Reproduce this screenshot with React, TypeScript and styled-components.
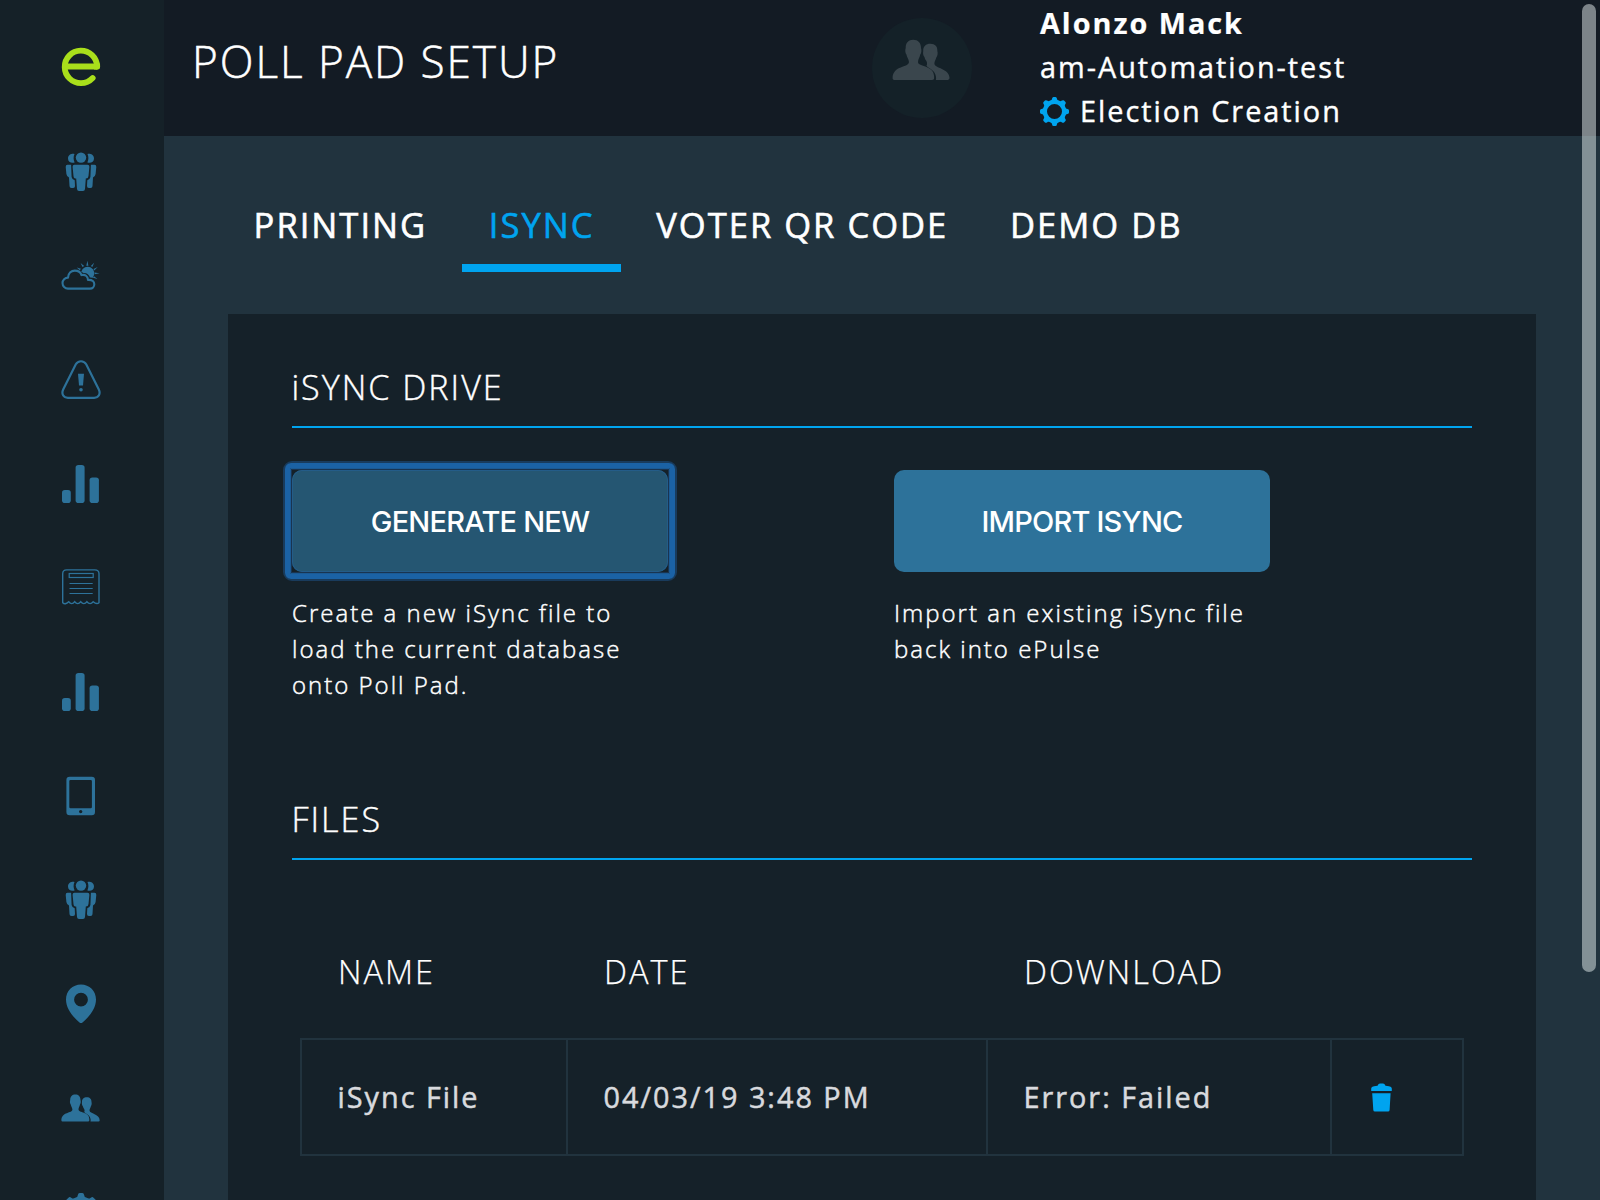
import React from "react";
import styled, { createGlobalStyle } from "styled-components";

const Global = createGlobalStyle`
  *, *::before, *::after { box-sizing: border-box; }
  body { margin: 0; overflow: hidden; background: #21333e; }
`;

const sans = `"Open Sans", "Noto Sans", sans-serif`;

const Page = styled.div`
  position: relative;
  display: flex;
  width: 1600px;
  height: 1200px;
  overflow: hidden;
  background: #21333e;
  color: #fff;
  font-family: ${sans};
`;

const Sidebar = styled.nav`
  flex: none;
  width: 164px;
  height: 1200px;
  padding: 16px 3px 0 0;
  display: flex;
  flex-direction: column;
  align-items: center;
  background: #152128;
  color: #2d729a;
  overflow: hidden;
`;

const NavItem = styled.a<{ $accent?: boolean }>`
  flex: none;
  display: flex;
  align-items: center;
  justify-content: center;
  width: 100%;
  height: 104px;
  padding-bottom: ${(p) => (p.$accent ? "2px" : "0")};
  color: ${(p) => (p.$accent ? "#a9df1b" : "inherit")};
`;

const Content = styled.div`
  flex: 1;
  display: flex;
  flex-direction: column;
`;

const Header = styled.header`
  flex: none;
  display: flex;
  height: 136px;
  padding-left: 28px;
  background: #131b24;
`;

const Title = styled.h1`
  margin: 0;
  width: 680px;
  font-size: 44.1px;
  font-weight: 300;
  line-height: 123px;
  letter-spacing: 1.95px;
  -webkit-text-stroke: 0.5px currentColor;
`;

const Avatar = styled.div`
  width: 100px;
  height: 100px;
  margin-top: 18px;
  padding: 21px 3px 0 0;
  border-radius: 50%;
  background: #142128;
  color: #3a464d;
  text-align: center;
`;

const UserInfo = styled.div`
  margin-left: 68px;
  font-size: 28.8px;
  letter-spacing: 2px;
`;

const UserLine = styled.div<{ $bold?: boolean }>`
  display: flex;
  align-items: center;
  height: 44px;
  white-space: nowrap;
  font-weight: ${(p) => (p.$bold ? 700 : 500)};
  -webkit-text-stroke: ${(p) => (p.$bold ? "0.2px" : "0.4px")} currentColor;
`;

const StageIcon = styled.span`
  display: flex;
  margin-right: 11px;
  padding-top: 2px;
  color: #00a4ef;
`;

const Tabs = styled.div`
  display: flex;
  gap: 8.5px;
  height: 136px;
  padding: 48px 0 0 63px;
`;

const Tab = styled.div<{ $active?: boolean }>`
  height: 88px;
  padding: 0 26.6px;
  font-size: 34.56px;
  font-weight: 500;
  line-height: 82px;
  letter-spacing: 2px;
  white-space: nowrap;
  border-bottom: 8px solid ${(p) => (p.$active ? "#00a4ef" : "transparent")};
  color: ${(p) => (p.$active ? "#00a4ef" : "#fff")};
  -webkit-text-stroke: 0.6px currentColor;
`;

const Panel = styled.main`
  width: 1308px;
  height: 886px;
  margin: 42px 0 0 64px;
  padding: 50px 64px 0;
  background: #152129;
`;

const SectionTitle = styled.h2`
  margin: 0;
  height: 64px;
  font-size: 34.1px;
  font-weight: 300;
  line-height: 47px;
  letter-spacing: 2px;
  text-indent: -0.6px;
  border-bottom: 2px solid #00a4ef;
  -webkit-text-stroke: 0.4px currentColor;
`;

const Actions = styled.div`
  display: grid;
  grid-template-columns: 376px 376px;
  column-gap: 226px;
  height: 368px;
  padding-top: 42px;
`;

const Button = styled.button<{ $focused?: boolean }>`
  display: block;
  width: 376px;
  height: 102px;
  padding: 2px 0 0;
  border: 0;
  border-radius: 10px;
  background: ${(p) => (p.$focused ? "#255672" : "#2d729a")};
  box-shadow: ${(p) => (p.$focused ? "inset 0 0 0 1px #245c88" : "none")};
  color: #fff;
  font: 500 29px/100px Inter, "Liberation Sans", sans-serif;
  letter-spacing: -0.8px;
`;

const FocusRing = styled.div`
  width: 394px;
  height: 120px;
  margin: -9px;
  border: 2px solid #193b5c;
  border-radius: 9px;
  background: #152129;
`;

const FocusInner = styled.div`
  height: 116px;
  border: 5px solid #1b62a5;
  border-radius: 6px;
  padding: 2px;
  box-shadow: inset 0 0 0 1px #1b5a94, inset 0 0 0 2px #193451;
`;

const Hint = styled.p`
  margin: 23px 0 0;
  font-size: 24px;
  font-weight: 300;
  line-height: 36px;
  letter-spacing: 2px;
  white-space: pre;
  -webkit-text-stroke: 0.45px currentColor;
`;

const Table = styled.div`
  margin: 68px 8px 0;
`;

const Row = styled.div<{ $head?: boolean }>`
  display: grid;
  grid-template-columns: 266px 420px 344px 130px;
  height: ${(p) => (p.$head ? "110px" : "118px")};
  ${(p) => (p.$head ? "padding-left: 3px;" : "border: 2px solid #21333e;")}
`;

const HeadCell = styled.div`
  padding-left: 35px;
  font-size: 32.5px;
  font-weight: 300;
  line-height: 88px;
  letter-spacing: 2px;
  -webkit-text-stroke: 0.25px currentColor;
`;

const Cell = styled.div<{ $icon?: boolean }>`
  display: flex;
  align-items: center;
  padding: 0 0 ${(p) => (p.$icon ? 0 : 2)}px ${(p) => (p.$icon ? 39 : 35.5)}px;
  font-size: 28.8px;
  font-weight: 500;
  letter-spacing: 2px;
  color: #d8dade;
  -webkit-text-stroke: 0.5px currentColor;
  &:not(:last-child) { border-right: 2px solid #21333e; }
`;

const Scrollbar = styled.div`
  position: absolute;
  top: 4px;
  left: 1582px;
  width: 14px;
  height: 968px;
  border-radius: 7px;
  background: rgba(235, 243, 243, 0.49);
`;

const Logo = () => (
  <svg width="40" height="40" viewBox="0 0 40 40" fill="none" stroke="currentColor" strokeWidth="5.800">
    <path d="M3 19.500H36" />
    <path d="M36.100 19.500A16.200 16.200 0 1 0 20 36.100C25 36.100 28.700 34.200 31.700 31" strokeLinecap="round" />
    <path d="M33 16.600H39L39.100 19.500Q39 22.400 36 22.400H33Z" fill="currentColor" stroke="none" />
  </svg>
);

const People = () => (
  <svg width="32" height="40" viewBox="0 0 32 40" fill="currentColor">
    <circle cx="16" cy="5.6" r="5.2" />
    <path d="M9.5 2C7.5 1.200 3 2.400 3 6.500S7 11.600 9.600 10.400C8.300 7.600 8.300 4.800 9.500 2ZM22.500 2C24.500 1.200 29 2.400 29 6.500S25 11.600 22.400 10.400C23.700 7.600 23.700 4.800 22.500 2Z" />
    <path d="M9.500 12.700H22.500Q24.500 12.700 24.400 14.700L23.500 24Q23.300 26.600 20.800 26.600L20 37Q19.800 39 18 39H14Q12.200 39 12 37L11.200 26.600Q8.700 26.600 8.500 24L7.600 14.700Q7.500 12.700 9.500 12.700Z" />
    <path d="M2.500 12.700H6.100L6.600 25Q7 27.500 9.700 28.200L10 34Q10 36 8.200 36H6.500Q4.500 36 4.500 34L4 25.500Q1.700 24.500 1.400 22L.7 15Q.6 12.700 2.500 12.700ZM29.500 12.700H25.900L25.400 25Q25 27.500 22.300 28.200L22 34Q22 36 23.800 36H25.500Q27.500 36 27.500 34L28 25.500Q30.300 24.500 30.600 22L31.300 15Q31.400 12.700 29.500 12.700Z" />
  </svg>
);

const Weather = () => (
  <svg width="40" height="40" viewBox="0 .7 40 40">
    <path d="M7 33.300A5.500 5.500 0 0 1 7 22.300C7.300 17.500 10.500 15.300 13.800 15.300C17.300 15.300 19.800 17.500 20.500 19.800C24 18.800 27 21 27 24.600C31.500 24.300 33.300 26.500 33.300 29C33.300 31.500 31.500 33.300 29 33.300Z" fill="none" stroke="currentColor" strokeWidth="2.100" strokeLinejoin="round" />
    <path d="M20.300 16.500A6.600 6.600 0 1 1 31.500 22.600C30.600 22.200 29.500 22.100 28.900 22.100C28.300 19.400 25.500 17.400 22.500 17.700Z" fill="currentColor" />
    <path d="M25.300 10.500L26.400 5.500L27.400 10.500ZM21.500 11.600L19.600 7.600L23.200 10.700ZM29.800 10.700L33.200 7.400L31.300 11.800ZM18.700 15L15.700 12.300L20 13.500ZM32.500 13.800L36.700 11.600L33.300 15.300ZM33.600 17.100L38.600 17.900L33.600 18.900ZM33 21L36.500 23.800L31.900 22.500Z" fill="currentColor" />
  </svg>
);

const Warning = () => (
  <svg width="40" height="40" viewBox="0 .5 40 40" fill="none">
    <path d="M14.800 4.800C17.200.700 22.800.700 25.200 4.800L37.700 29.800C40 34.500 37.500 38.300 33.200 38.300H6.800C2.500 38.300 0 34.500 2.300 29.800Z" stroke="currentColor" strokeWidth="2.200" />
    <path d="M17 14.200H23L22 26H18Z" fill="currentColor" />
    <circle cx="20" cy="30.300" r="1.800" fill="currentColor" />
  </svg>
);

const Bars = () => (
  <svg width="38" height="38" viewBox=".4 0 38 38" fill="currentColor">
    <rect x=".4" y="25" width="8.800" height="13" rx="2.800" />
    <rect x="14" y="0" width="9" height="38" rx="2.800" />
    <rect x="28" y="12.500" width="9.300" height="25.500" rx="2.800" />
  </svg>
);

const Receipt = () => (
  <svg width="38" height="38" viewBox=".3 1.300 38 38" fill="none" stroke="currentColor">
    <path d="M1 35V6Q1 2.200 5 2.200H33Q37.300 2.200 37.300 6V35Q35 37 31.500 34Q28.300 37.800 25.200 34Q22.200 37.800 19 34Q16 37.800 13 34Q10 37.800 7 34Q3.500 37.500 1 35Z" strokeWidth="1.400" />
    <rect x="7.500" y="5.800" width="24" height="4" strokeWidth="1.200" />
    <path d="M7.800 15.800H31M7.800 20.800H31M7.800 25.800H31" strokeWidth="1.200" />
  </svg>
);

const Tablet = () => (
  <svg width="30" height="40" viewBox=".3 0 30 40" fill="currentColor" fillRule="evenodd">
    <path d="M4 .700H26Q29.300.700 29.300 4V36Q29.300 39.200 26 39.200H4Q.7 39.200.7 36V4Q.7.700 4 .700ZM4.800 4Q3.600 4 3.600 5.200V31Q3.600 32.200 4.800 32.200H25Q26.200 32.200 26.200 31V5.200Q26.200 4 25 4ZM15 33.900A1.700 1.700 0 1 0 15 37.300A1.700 1.700 0 1 0 15 33.900Z" />
  </svg>
);

const Pin = () => (
  <svg width="32" height="40" viewBox="0 0 32 40" fill="currentColor" fillRule="evenodd">
    <path d="M16 .500C24.500.500 31 7 31 15.500C31 25 23.500 33.500 17.500 38.500Q16 39.700 14.500 38.500C8.500 33.500 1 25 1 15.500C1 7 7.500.500 16 .500ZM16 8.800A6.900 6.900 0 1 0 16 22.600A6.900 6.900 0 1 0 16 8.800Z" />
  </svg>
);

const Users = ({ width = 39 }: { width?: number }) => (
  <svg width={width} height={(width * 28) / 39} viewBox="0 0 39 28" fill="currentColor">
    <path d="M14.300.500C17.500.500 19.500 2.500 19.500 6C20 7.500 19.800 9.500 19 10.500C18.700 12.500 17.500 13.500 17.500 15.500C17.500 19 28.300 17.500 28.300 25V26.500Q28.300 27.500 27 27.500H1.500Q.4 27.500.4 26.500C.5 17.500 11.400 19.500 11.400 15.500C11.300 13.500 10 12.500 9.700 10.500C8.900 9.500 8.700 7.500 9.200 6C9.200 2.500 11.100.500 14.300.500Z" />
    <path d="M25.800 3.200C29 3.200 30.700 5.300 30.500 8C31 9.500 30.500 11.500 29.800 12.500C29.500 14 28.500 15 28.500 16.500C28.700 20 38.500 19.500 38.700 26.300Q38.700 27.500 37.500 27.500H29.500C29.900 26 29.500 24.500 28.700 22.800C27.500 20.500 24 19.500 23.200 18C24 17 23.500 15 22.500 14C22 13 22 12.500 21.700 12C21 11 20.700 9.500 21 8C20.800 5 22.800 3.200 25.800 3.200Z" />
  </svg>
);

const Gear = ({ size = 29 }: { size?: number }) => (
  <svg width={size} height={size} viewBox="-14.500 -14.500 29 29">
    <circle r="9.600" fill="none" stroke="currentColor" strokeWidth="4.200" />
    {[0, 45, 90, 135, 180, 225, 270, 315].map((a) => (
      <path key={a} transform={`rotate(${a})`} d="M-4 -10.500Q-2.600 -11.200 -2.400 -13Q-2.200 -14.500 -1 -14.500H1Q2.200 -14.500 2.400 -13Q2.600 -11.200 4 -10.500Z" fill="currentColor" />
    ))}
  </svg>
);

const Trash = () => (
  <svg width="21" height="29" viewBox="0 0 21 29" fill="#00a4ef">
    <path d="M.2 8V5.500Q.2 3.500 3 3.300L6.500 2.800Q7.500.500 9 .500H12Q13.500.500 14.500 2.800L18 3.300Q20.800 3.500 20.800 5.500V8ZM1.200 10.300H19.600L18.600 27Q18.500 28.600 17 28.600H4Q2.400 28.600 2.300 27Z" />
  </svg>
);

const navIcons = [People, Weather, Warning, Bars, Receipt, Bars, Tablet, People, Pin, Users];

export default function App() {
  return (
    <Page>
      <Global />
      <Sidebar>
        <NavItem $accent><Logo /></NavItem>
        {navIcons.map((Icon, i) => (
          <NavItem key={i}><Icon /></NavItem>
        ))}
        <NavItem><Gear size={38} /></NavItem>
      </Sidebar>
      <Content>
        <Header>
          <Title>POLL PAD SETUP</Title>
          <Avatar><Users width={58} /></Avatar>
          <UserInfo>
            <UserLine $bold>Alonzo Mack</UserLine>
            <UserLine>am-Automation-test</UserLine>
            <UserLine><StageIcon><Gear /></StageIcon>Election Creation</UserLine>
          </UserInfo>
        </Header>
        <Tabs>
          <Tab>PRINTING</Tab>
          <Tab $active>ISYNC</Tab>
          <Tab>VOTER QR CODE</Tab>
          <Tab>DEMO DB</Tab>
        </Tabs>
        <Panel>
          <SectionTitle>iSYNC DRIVE</SectionTitle>
          <Actions>
            <div>
              <FocusRing><FocusInner><Button $focused>GENERATE NEW</Button></FocusInner></FocusRing>
              <Hint>{"Create a new iSync file to\nload the current database\nonto Poll Pad."}</Hint>
            </div>
            <div>
              <Button>IMPORT ISYNC</Button>
              <Hint>{"Import an existing iSync file\nback into ePulse"}</Hint>
            </div>
          </Actions>
          <SectionTitle>FILES</SectionTitle>
          <Table>
            <Row $head>
              <HeadCell>NAME</HeadCell>
              <HeadCell>DATE</HeadCell>
              <HeadCell>DOWNLOAD</HeadCell>
            </Row>
            <Row>
              <Cell>iSync File</Cell>
              <Cell>04/03/19 3:48 PM</Cell>
              <Cell>Error: Failed</Cell>
              <Cell $icon><Trash /></Cell>
            </Row>
          </Table>
        </Panel>
      </Content>
      <Scrollbar />
    </Page>
  );
}
